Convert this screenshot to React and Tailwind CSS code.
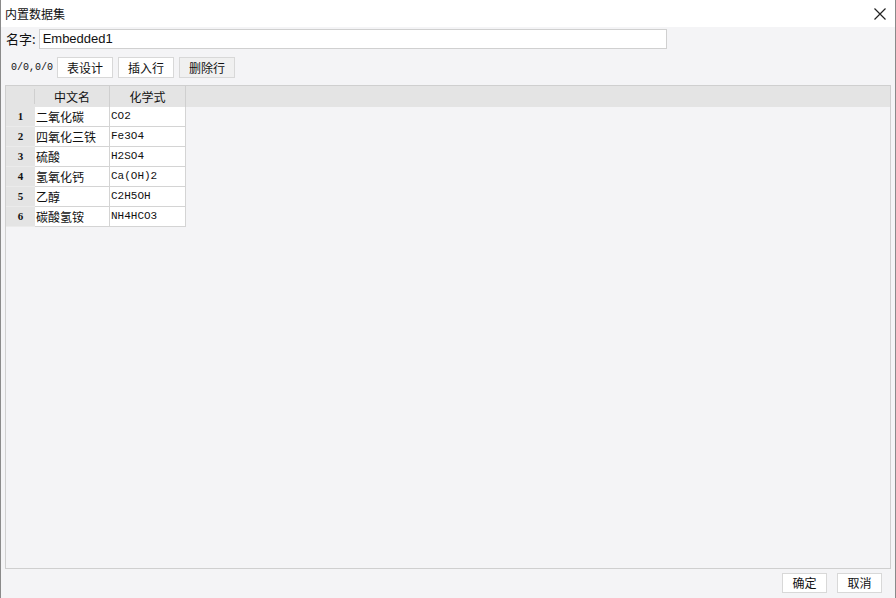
import React from "react";

const rows = [
  ["二氧化碳", "CO2"],
  ["四氧化三铁", "Fe3O4"],
  ["硫酸", "H2SO4"],
  ["氢氧化钙", "Ca(OH)2"],
  ["乙醇", "C2H5OH"],
  ["碳酸氢铵", "NH4HCO3"],
];

const cjk = { fontFamily: '"Noto Sans CJK SC", "Noto Sans", sans-serif' };
const mono = { fontFamily: '"Liberation Mono", "DejaVu Sans Mono", monospace' };

export default function App() {
  return (
    <div className="w-[896px] h-[598px] flex flex-col bg-[#f4f4f6] border-x border-[#8a8a8a] overflow-hidden text-[#111]" style={cjk}>
      <div className="h-[27px] shrink-0 bg-white flex items-center justify-between pl-[4px] pr-[8px]">
        <span className="text-[12px] leading-none">内置数据集</span>
        <svg width="14" height="14" viewBox="0 0 14 14">
          <path d="M1.5 1.5 L12.5 12.5 M12.5 1.5 L1.5 12.5" stroke="#222" strokeWidth="1.2" />
        </svg>
      </div>
      <div className="flex items-center h-[21px] mt-[1px] pl-[5px]">
        <span className="text-[13px] leading-none">名字:</span>
        <div className="ml-[3px] w-[628px] h-[20px] bg-white border border-[#d0d0d0] flex items-center pl-[3px]">
          <span className="text-[13px] leading-none" style={{ fontFamily: '"Liberation Sans", Arial, sans-serif' }}>Embedded1</span>
        </div>
      </div>
      <div className="flex items-center h-[21px] mt-[8px] pl-[10px]">
        <span className="text-[10px] leading-none mr-[4px]" style={mono}>0/0,0/0</span>
        <button className="w-[56px] h-[21px] bg-white border border-[#d8d8d8] text-[12px] leading-none mr-[5px]">表设计</button>
        <button className="w-[56px] h-[21px] bg-white border border-[#d8d8d8] text-[12px] leading-none mr-[5px]">插入行</button>
        <button className="w-[56px] h-[21px] bg-[#f0f0f0] border border-[#d8d8d8] text-[12px] leading-none">删除行</button>
      </div>
      <div className="mt-[7px] mx-[4px] h-[484px] border border-[#cfcfcf] flex flex-col">
        <div className="h-[21px] bg-[#e4e4e4] flex items-stretch shrink-0">
          <div className="w-[29px] border-r border-[#cfcfcf] my-[3px]" />
          <div className="w-[75px] flex items-center justify-center text-[12px] border-r border-[#cfcfcf]">中文名</div>
          <div className="w-[76px] flex items-center justify-center text-[12px] border-r border-[#cfcfcf]">化学式</div>
        </div>
        {rows.map((r, i) => (
          <div key={i} className="h-[20px] flex items-stretch">
            <div className="w-[29px] bg-[#e4e4e4] flex items-center justify-center text-[11px] font-bold border-b border-[#ebebeb]" style={{ fontFamily: '"Liberation Serif", serif' }}>{i + 1}</div>
            <div className="w-[75px] bg-white border-r border-b border-[#d4d4d4] flex items-center pl-[1px] text-[12px]">{r[0]}</div>
            <div className="w-[76px] bg-white border-r border-b border-[#d4d4d4] flex items-center pl-[1px] text-[11px]" style={mono}>{r[1]}</div>
          </div>
        ))}
      </div>
      <div className="flex justify-end items-center gap-[10px] mt-[4px] pr-[13px]">
        <button className="w-[45px] h-[20px] bg-white border border-[#d8d8d8] text-[12px] leading-none">确定</button>
        <button className="w-[45px] h-[20px] bg-white border border-[#d8d8d8] text-[12px] leading-none">取消</button>
      </div>
    </div>
  );
}
